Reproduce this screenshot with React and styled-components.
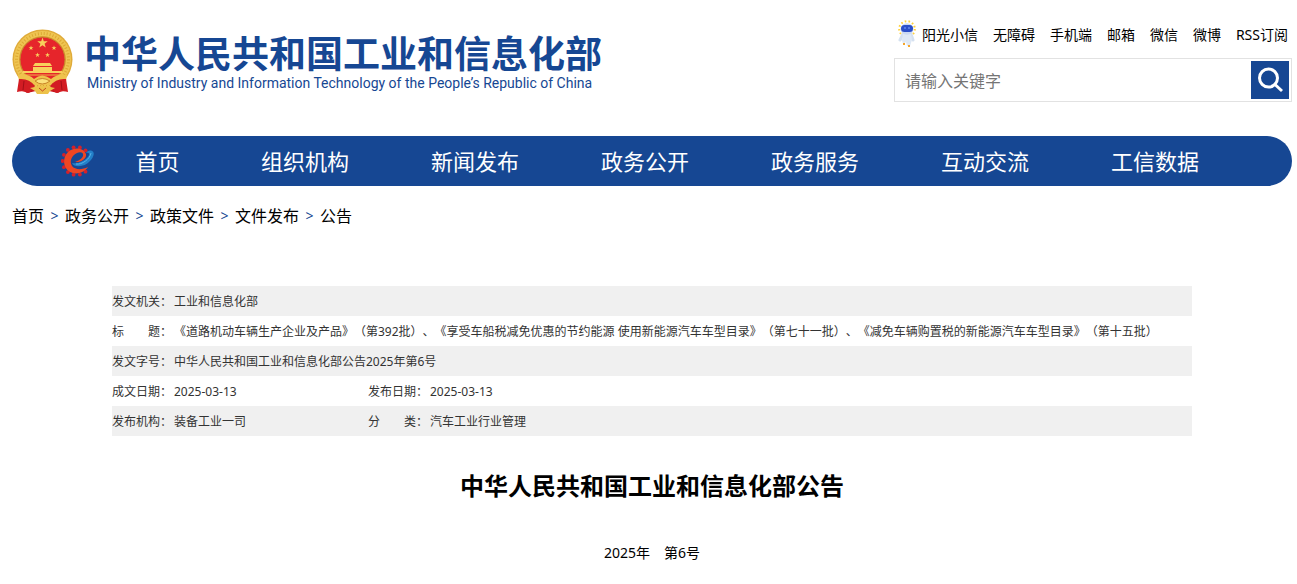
import { createGlobalStyle } from "styled-components";
import styled from "styled-components";

const BLUE = "#164793";

const NAV = ["组织机构", "新闻发布", "政务公开", "政务服务", "互动交流", "工信数据"];
const TOP_LINKS = ["无障碍", "手机端", "邮箱", "微信", "微博", "RSS订阅"];
const CRUMBS = ["首页", "政务公开", "政策文件", "文件发布", "公告"];

const GlobalStyle = createGlobalStyle`
  body {
    margin: 0;
    background: #fff;
    color: #000;
    font-family: "Noto Sans", "Noto Sans CJK SC", sans-serif;
    font-size: 14px;
    text-spacing-trim: space-all;
  }
  * {
    box-sizing: border-box;
  }
  a {
    color: inherit;
    text-decoration: none;
  }
`;

const Page = styled.div`
  padding: 20px 5px 0 12px;
`;

const Header = styled.header`
  display: flex;
  justify-content: space-between;
  align-items: flex-start;
  height: 116px;
`;

const Brand = styled.a`
  display: flex;
  gap: 11px;
  padding-top: 9px;
  color: ${BLUE};
  white-space: nowrap;
`;

const BrandText = styled.span`
  display: flex;
  flex-direction: column;
  padding-top: 2px;
`;

const BrandName = styled.span`
  font-size: 37px;
  font-weight: 700;
  line-height: 46px;
`;

const BrandSub = styled.span`
  padding-left: 3px;
  font-family: Roboto, sans-serif;
  font-size: 14px;
  line-height: 12px;
`;

const Tools = styled.div`
  width: 398px;
`;

const TopLinks = styled.nav`
  display: flex;
  justify-content: flex-end;
  align-items: center;
  gap: 15px;
  height: 28px;
  padding-right: 4px;
  white-space: nowrap;
`;

const RobotLink = styled.a`
  display: flex;
  align-items: center;
  gap: 4px;
`;

const SearchForm = styled.form`
  display: flex;
  height: 44px;
  margin-top: 10px;
  padding: 2px;
  border: 1px solid #e2e2e2;
`;

const SearchInput = styled.input`
  flex: 1;
  min-width: 0;
  padding: 2px 8px 0;
  border: 0;
  outline: 0;
  font-family: inherit;
  font-size: 16px;
  &::placeholder {
    color: #757575;
  }
`;

const SearchButton = styled.button`
  display: flex;
  align-items: center;
  justify-content: center;
  width: 38px;
  height: 38px;
  padding: 0;
  border: 0;
  background: ${BLUE};
`;

const NavBar = styled.nav`
  display: flex;
  align-items: center;
  height: 50px;
  padding: 0 52px 0 49px;
  border-radius: 25px;
  background: ${BLUE};
  color: #fff;
`;

const NavItem = styled.a`
  flex: ${({ $home }) => ($home ? "0 0 125px" : "1")};
  font-size: 22px;
  line-height: 48px;
  text-align: center;
  white-space: nowrap;
`;

const Crumbs = styled.nav`
  display: flex;
  align-items: center;
  gap: 6px;
  height: 58px;
  font-size: 16px;
`;

const Separator = styled.span`
  width: 9px;
  color: ${BLUE};
  font-size: 14px;
  text-align: center;
`;

const Article = styled.main`
  max-width: 1080px;
  margin: 42px auto 0;
`;

const InfoTable = styled.table`
  width: 100%;
  border-collapse: collapse;
  table-layout: fixed;
  color: #333;
  font-size: 12px;
  line-height: 28px;
  white-space: nowrap;
  th,
  td {
    height: 30px;
    padding: 2px 0 0;
    font-weight: 400;
    text-align: left;
  }
  tr:nth-child(odd) {
    background: #f0f0f0;
  }
`;

const Title = styled.h1`
  margin: 32px 0 0;
  font-size: 24px;
  line-height: 36px;
  text-align: center;
`;

const Issue = styled.p`
  margin: 37px 0 0;
  line-height: 24px;
  text-align: center;
`;

const star = (cx, cy, r) =>
  Array.from({ length: 10 }, (_, i) => {
    const radius = i % 2 ? r * 0.4 : r;
    const angle = (i * Math.PI) / 5 - Math.PI / 2;
    return `${cx + radius * Math.cos(angle)},${cy + radius * Math.sin(angle)}`;
  }).join(" ");

function Emblem() {
  return (
    <svg width="61" height="66" viewBox="0 0 61 66" aria-hidden="true">
      <path d="M8 44 L7 62 Q11 61 15 64 L24 62 H37 L46 64 Q50 61 54 62 L53 44Z" fill="#c8161d" />
      <circle cx="30.5" cy="30.5" r="30" fill="#e0ab3a" />
      <circle cx="30.5" cy="30.5" r="26" fill="none" stroke="#efc552" strokeWidth="5" />
      <circle cx="30.5" cy="30.5" r="26" fill="none" stroke="#dca834" strokeWidth="3" strokeDasharray="1 2" />
      <circle cx="30.5" cy="30.5" r="22.5" fill="#e6252b" stroke="#c9852c" />
      <g fill="#f8d05c">
        <polygon points={star(30.5, 14, 5.5)} />
        <polygon points={star(19, 19, 2.6)} />
        <polygon points={star(42, 19, 2.6)} />
        <polygon points={star(25.5, 26, 2.6)} />
        <polygon points={star(35.5, 26, 2.6)} />
        <path d="M23 34 h15 l2 3 h-19z M21 38 h19 v4 h10 l1 2 H10 l1-2 h10z" />
      </g>
      <path d="M11 46 h39" stroke="#f0b744" />
      <path d="M6 46 Q16 44 22 50 Q30 43 39 50 Q46 44 55 46 L54 52 Q44 50 38 56 H23 Q17 50 7 52Z" fill="#efc34d" />
      <path d="M23 52 Q30 47 38 52 Q30 58 23 52Z" fill="#fbe07a" stroke="#c98528" />
      <path d="M7 50 Q17 49 23 57 L17 64 Q11 61 5 63Z M54 50 Q44 49 38 57 L44 64 Q50 61 56 63Z" fill="#d31c23" />
      <path d="M12 52 L11 61 M49 52 L50 61" stroke="#a40e17" />
      <path d="M18 59 L28 57 H33 L43 59 L38 62 L36 65 H25 L23 62Z" fill="#edc24a" />
      <path d="M27 59 L30.5 62 L34 59" fill="none" stroke="#c3441f" />
    </svg>
  );
}

function Robot() {
  return (
    <svg width="20" height="28" viewBox="0 0 20 28" aria-hidden="true">
      <circle cx="9" cy="9" r="7.8" fill="none" stroke="#ffd13b" strokeWidth="2" strokeDasharray="1.6 2.2" />
      <path d="M5 14 L2 20 M13 14 L15 20" stroke="#d5e1f0" strokeWidth="3" strokeLinecap="round" />
      <path d="M5 14 H13 L14 20 L12 26 H9 L8 22 L5 24 L4 20Z" fill="#dfe9f6" />
      <ellipse cx="9" cy="9" rx="6.5" ry="5.8" fill="#cbd9f2" />
      <rect x="3" y="5" width="12" height="7" rx="3.5" fill="#2c4fc9" />
      <path d="M6 8 h2 M10 8 h2" stroke="#7ba3ff" />
      <path d="M5 24 h2 M10 26 h2" stroke="#f5a52b" strokeWidth="2" />
    </svg>
  );
}

function GearLogo() {
  const teeth = [50, 76, 102, 128, 154, 180, 206, 232, 258, 284, 310];
  return (
    <svg width="34" height="32" viewBox="0 0 34 32" aria-hidden="true">
      <g fill="#d5202a">
        {teeth.map((deg) => (
          <circle
            key={deg}
            cx={15.5 + 14 * Math.cos((deg * Math.PI) / 180)}
            cy={16 + 14 * Math.sin((deg * Math.PI) / 180)}
            r="1.9"
          />
        ))}
      </g>
      <path
        d="M25 9 C22 2 12 2 7 7 C1 13 2 23 9 27 C15 30 23 28 27 22 C21 25 14 25 11 21 C8 16 11 10 16 8 C20 6 23 8 22 11 C21 14 17 16 14 17 C19 18 26 14 25 9Z"
        fill="#ee4623"
      />
      <path
        d="M11 18 C13 23 24 22 29 16 C33 12 34 7 31 6 C29 5 26 6 25 8 C29 7 29 10 26 13 C22 17 16 19 11 18Z"
        fill="#2380c8"
      />
      <path d="M15 19 C21 20 29 14 30 8" fill="none" stroke="#54b2e8" />
    </svg>
  );
}

function SearchIcon() {
  return (
    <svg width="26" height="26" viewBox="0 0 26 26" fill="none" stroke="#fff" strokeWidth="3" aria-hidden="true">
      <circle cx="11.5" cy="11" r="9" />
      <path d="M18 17.5 L25 24" />
    </svg>
  );
}

function SiteHeader() {
  return (
    <Header>
      <Brand href="#">
        <Emblem />
        <BrandText>
          <BrandName>中华人民共和国工业和信息化部</BrandName>
          <BrandSub>
            Ministry of Industry and Information Technology of the People’s Republic of China
          </BrandSub>
        </BrandText>
      </Brand>
      <Tools>
        <TopLinks>
          <RobotLink href="#">
            <Robot />
            阳光小信
          </RobotLink>
          {TOP_LINKS.map((link) => (
            <a href="#" key={link}>
              {link}
            </a>
          ))}
        </TopLinks>
        <SearchForm onSubmit={(e) => e.preventDefault()}>
          <SearchInput type="text" aria-label="请输入关键字" placeholder="请输入关键字" />
          <SearchButton type="submit" aria-label="搜索">
            <SearchIcon />
          </SearchButton>
        </SearchForm>
      </Tools>
    </Header>
  );
}

function DocumentInfo() {
  return (
    <InfoTable>
      <colgroup>
        <col width="62" />
        <col width="194" />
        <col width="62" />
        <col />
      </colgroup>
      <tbody>
        <tr>
          <th scope="row">发文机关：</th>
          <td colSpan="3">工业和信息化部</td>
        </tr>
        <tr>
          <th scope="row">标　　题：</th>
          <td colSpan="3">
            《道路机动车辆生产企业及产品》（第392批）、《享受车船税减免优惠的节约能源 使用新能源汽车车型目录》（第七十一批）、《减免车辆购置税的新能源汽车车型目录》（第十五批）
          </td>
        </tr>
        <tr>
          <th scope="row">发文字号：</th>
          <td colSpan="3">中华人民共和国工业和信息化部公告2025年第6号</td>
        </tr>
        <tr>
          <th scope="row">成文日期：</th>
          <td>2025-03-13</td>
          <th scope="row">发布日期：</th>
          <td>2025-03-13</td>
        </tr>
        <tr>
          <th scope="row">发布机构：</th>
          <td>装备工业一司</td>
          <th scope="row">分　　类：</th>
          <td>汽车工业行业管理</td>
        </tr>
      </tbody>
    </InfoTable>
  );
}

function App() {
  return (
    <Page lang="zh-CN">
      <GlobalStyle />
      <SiteHeader />
      <NavBar>
        <GearLogo />
        <NavItem href="#" $home>
          首页
        </NavItem>
        {NAV.map((item) => (
          <NavItem href="#" key={item}>
            {item}
          </NavItem>
        ))}
      </NavBar>
      <Crumbs aria-label="当前位置">
        {CRUMBS.flatMap((crumb, i) => [
          i > 0 && <Separator key={`${crumb}-sep`}>&gt;</Separator>,
          <a href="#" key={crumb}>
            {crumb}
          </a>,
        ])}
      </Crumbs>
      <Article>
        <DocumentInfo />
        <Title>中华人民共和国工业和信息化部公告</Title>
        <Issue>2025年　第6号</Issue>
      </Article>
    </Page>
  );
}

export default App;
